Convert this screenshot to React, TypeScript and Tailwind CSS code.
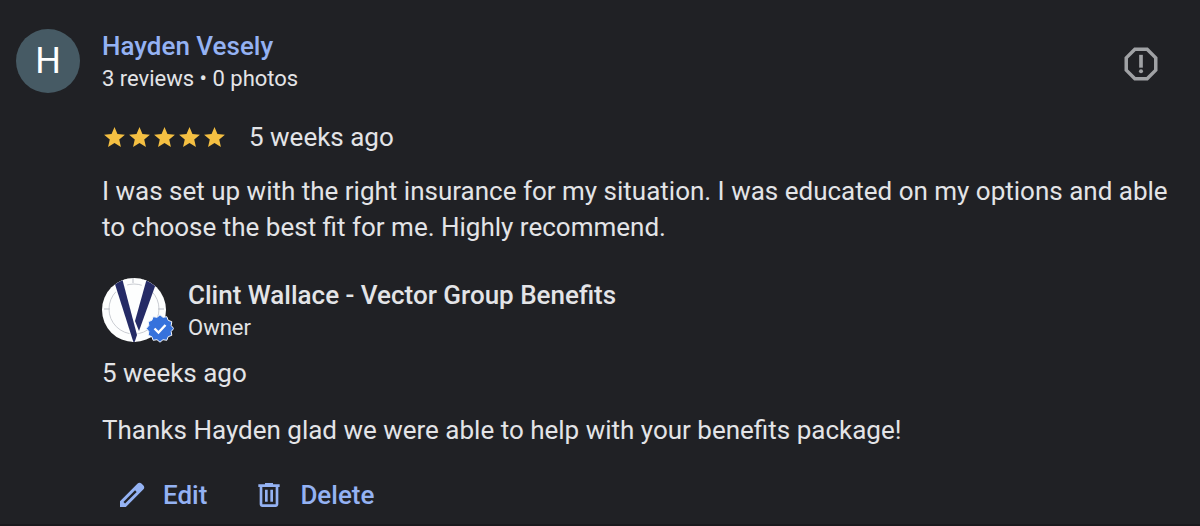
import React from "react";

function Star() {
  return (
    <svg viewBox="0 0 24 24" className="h-[25px] w-[25px] shrink-0 fill-[#f4bf42]" aria-hidden="true">
      <path d="M12 17.27 18.18 21l-1.64-7.03L22 9.24l-7.19-.61L12 2 9.19 8.63 2 9.24l5.46 4.73L5.82 21z" />
    </svg>
  );
}

function ReportIcon() {
  return (
    <svg viewBox="0 0 24 24" className="h-11 w-11 fill-[#a0a2a5]" aria-hidden="true">
      <path d="M15.73 3H8.27L3 8.27v7.46L8.27 21h7.46L21 15.73V8.27L15.73 3zM19.1 14.95 14.95 19.1H9.05L4.9 14.95V9.05L9.05 4.9h5.9l4.15 4.15v5.9z" />
      <circle cx="12" cy="16" r="1.1" />
      <path d="M11 7h2v7h-2z" />
    </svg>
  );
}

function EditIcon() {
  return (
    <svg viewBox="0 0 24 24" className="h-8 w-8" aria-hidden="true">
      <path
        className="fill-[#94b2f3]"
        d="M20.6 4.94 19.06 3.4c-.78-.78-2.05-.78-2.83 0L3 16.62V21h4.38L20.6 7.77c.79-.78.79-2.05 0-2.83z"
      />
      <path d="M6.2 17.8 14.9 9.1" fill="none" stroke="#202125" strokeWidth="1.7" />
    </svg>
  );
}

function DeleteIcon() {
  return (
    <svg viewBox="0 0 24 24" className="h-8 w-8 fill-[#94b2f3]" aria-hidden="true">
      <path d="M15 4V3H9v1H4v2h1v13c0 1.1.9 2 2 2h10c1.1 0 2-.9 2-2V6h1V4h-5zm2 15H7V6h10v13z" />
      <path d="M9 8h2v9H9zM13 8h2v9h-2z" />
    </svg>
  );
}

function OwnerLogo() {
  return (
    <svg viewBox="0 0 72 66" className="h-[66px] w-[72px]" role="img" aria-label="Vector Group Benefits, verified">
      <defs>
        <clipPath id="logo-disc">
          <circle cx="32" cy="33" r="32" />
        </clipPath>
      </defs>
      <circle cx="32" cy="33" r="32" fill="#fdfefe" />
      <g clipPath="url(#logo-disc)">
        <circle cx="32" cy="32" r="25" fill="none" stroke="#c9ccd2" strokeWidth="1" />
        <path d="M31 1v5M2 32h6M56 32h6" stroke="#b9bdc6" strokeWidth="1" />
        <path d="M9 0h14l14 50-4 17h-2z" fill="#fdfefe" />
        <path d="M42 0h14L37 57l-7-12z" fill="#fdfefe" />
        <path d="M11 1h9l15 57-3 9z" fill="#252b66" />
        <path d="M45 1h11L37 54l-4-10z" fill="#252b66" />
      </g>
      <path
        d="M58 37.8L61 40.3L64.8 39.7L66.2 43.3L69.8 44.7L69.2 48.5L71.7 51.5L69.2 54.5L69.8 58.3L66.2 59.7L64.8 63.3L61 62.7L58 65.2L55 62.7L51.2 63.3L49.8 59.7L46.2 58.3L46.8 54.5L44.3 51.5L46.8 48.5L46.2 44.7L49.8 43.3L51.2 39.7L55 40.3z"
        fill="#3672dc"
        stroke="#f4f7fc"
        strokeWidth="1"
        strokeLinejoin="round"
      />
      <path d="m52.5 51.5 4 4 7-7.500" fill="none" stroke="#fff" strokeWidth="2.4" />
    </svg>
  );
}

export default function App() {
  return (
    <main className="min-h-screen border-b-2 border-[#19191d] bg-[#202125] font-['Roboto',sans-serif] text-[#e3e4e7]">
      <article className="flex items-start gap-[22px] pt-7 pr-7 pl-4">
        <div className="mt-px flex h-16 w-16 shrink-0 items-center justify-center rounded-full bg-[#465a64] text-[36px] text-white">
          H
        </div>

        <div className="min-w-0 flex-1">
          <header className="flex items-start justify-between pr-[9px]">
            <div>
              <a href="#profile" className="block text-[26px] leading-9 font-medium text-[#94b2f3]">
                Hayden Vesely
              </a>
              <p className="text-[22px] leading-[30px]">3 reviews • 0 photos</p>
            </div>
            <button type="button" aria-label="Report review" className="mt-[14px]">
              <ReportIcon />
            </button>
          </header>

          <div className="mt-[25px] flex items-center gap-[22px]">
            <div className="flex" role="img" aria-label="5 stars">
              <Star />
              <Star />
              <Star />
              <Star />
              <Star />
            </div>
            <span className="text-[26px] leading-9">5 weeks ago</span>
          </div>

          <p className="mt-[18px] text-[26px] leading-9">
            I was set up with the right insurance for my situation. I was educated on my options and able
            to choose the best fit for me. Highly recommend.
          </p>

          <section>
            <div className="mt-8 flex items-start gap-[14px]">
              <OwnerLogo />
              <div>
                <h2 className="text-[26px] leading-9 font-medium">Clint Wallace - Vector Group Benefits</h2>
                <p className="text-[22px] leading-[30px]">Owner</p>
              </div>
            </div>
            <p className="mt-3 text-[26px] leading-9">5 weeks ago</p>
            <p className="mt-[21px] text-[26px] leading-9">
              Thanks Hayden glad we were able to help with your benefits package!
            </p>

            <div className="mt-[29px] flex items-center gap-[46px] pl-[14px] text-[26px] leading-9 font-medium text-[#94b2f3]">
              <button type="button" className="flex items-center gap-[15px]">
                <EditIcon />
                Edit
              </button>
              <button type="button" className="flex items-center gap-[15px]">
                <DeleteIcon />
                Delete
              </button>
            </div>
          </section>
        </div>
      </article>
    </main>
  );
}
